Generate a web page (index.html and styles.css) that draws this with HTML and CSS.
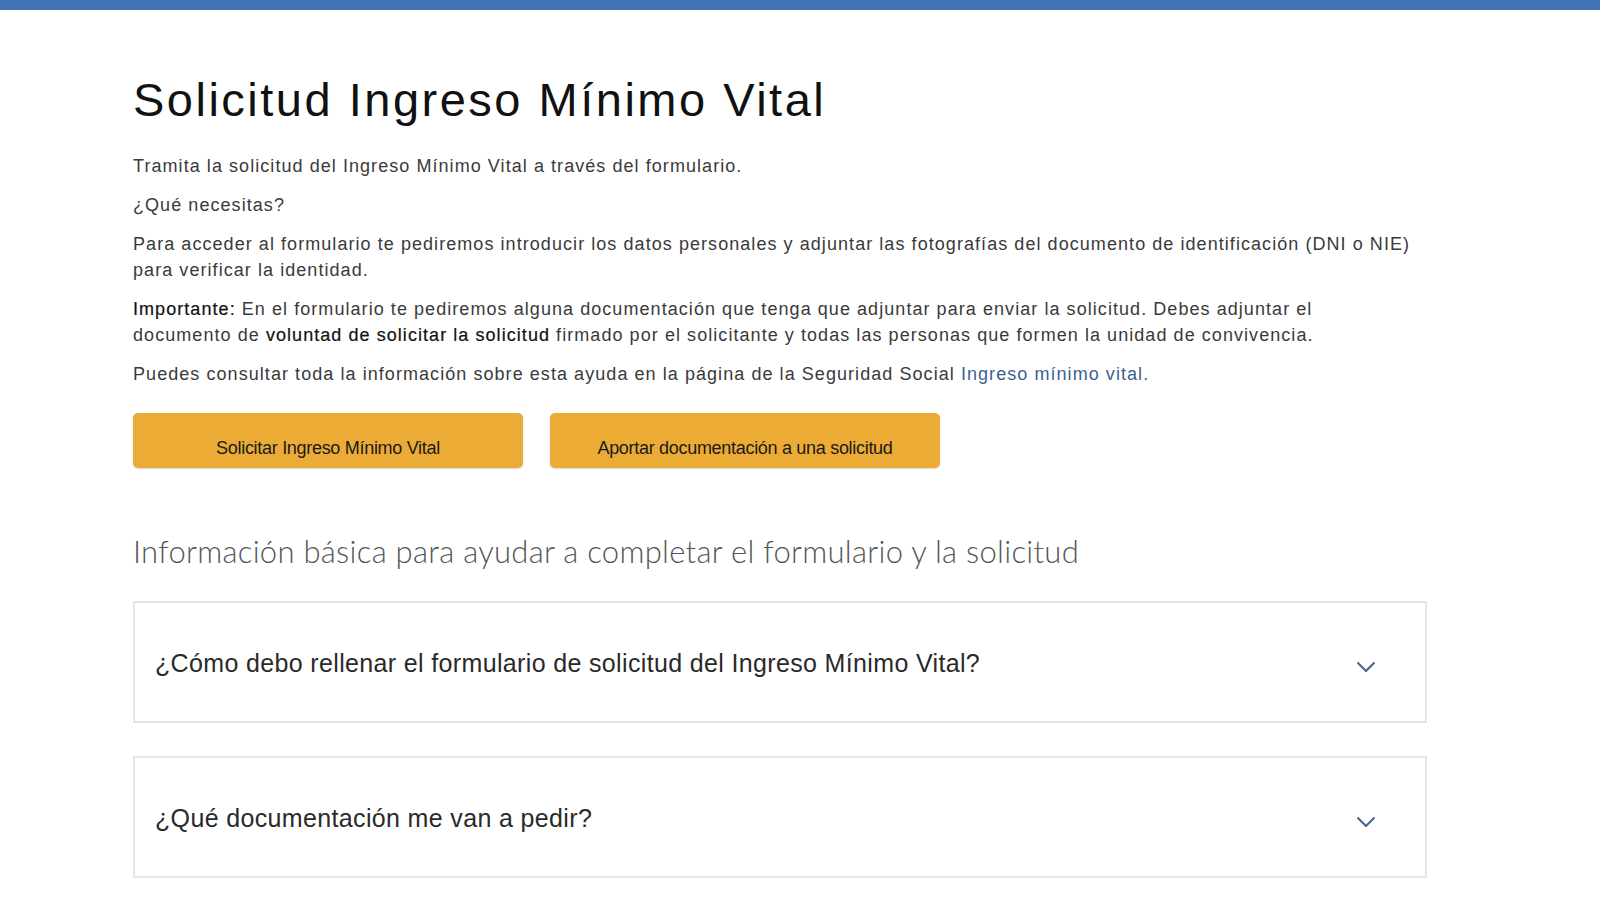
FILE: index.html
```html
<!DOCTYPE html>
<html lang="es">
<head>
<meta charset="utf-8">
<title>Solicitud Ingreso Mínimo Vital</title>
<link rel="stylesheet" href="styles.css">
</head>
<body>
<div class="topbar"></div>
<main class="page">
  <h1 class="title">Solicitud Ingreso Mínimo Vital</h1>
  <p class="txt">Tramita la solicitud del Ingreso Mínimo Vital a través del formulario.</p>
  <p class="txt">¿Qué necesitas?</p>
  <p class="txt">Para acceder al formulario te pediremos introducir los datos personales y adjuntar las fotografías del documento de identificación (DNI o NIE) para verificar la identidad.</p>
  <p class="txt"><span class="strong">Importante:</span> En el formulario te pediremos alguna documentación que tenga que adjuntar para enviar la solicitud. Debes adjuntar el<br>documento de <span class="strong">voluntad de solicitar la solicitud</span> firmado por el solicitante y todas las personas que formen la unidad de convivencia.</p>
  <p class="txt">Puedes consultar toda la información sobre esta ayuda en la página de la Seguridad Social <a class="link" href="#">Ingreso mínimo vital.</a></p>
  <div class="actions">
    <a class="btn" href="#">Solicitar Ingreso Mínimo Vital</a>
    <a class="btn" href="#">Aportar documentación a una solicitud</a>
  </div>
  <h2 class="subtitle">Información básica para ayudar a completar el formulario y la solicitud</h2>
  <div class="acc">
    <div class="acc-item">
      <span class="acc-q">¿Cómo debo rellenar el formulario de solicitud del Ingreso Mínimo Vital?</span>
      <svg class="chev" width="20" height="12" viewBox="0 0 20 12"><path d="M1.5 1.5 L10 10 L18.5 1.5" fill="none" stroke="#46648f" stroke-width="2"/></svg>
    </div>
    <div class="acc-item">
      <span class="acc-q">¿Qué documentación me van a pedir?</span>
      <svg class="chev" width="20" height="12" viewBox="0 0 20 12"><path d="M1.5 1.5 L10 10 L18.5 1.5" fill="none" stroke="#46648f" stroke-width="2"/></svg>
    </div>
  </div>
</main>
</body>
</html>
```
FILE: styles.css
```css
html, body { margin: 0; padding: 0; background: #fff; }
body { font-family: "Liberation Sans", Arial, sans-serif; color: #333; overflow: hidden; }
.topbar { height: 10px; background: #4473b3; }
.page { width: 1294px; padding-left: 133px; }
.title { font-weight: 400; font-size: 47px; line-height: 1; margin: 66px 0 30px; color: #111; letter-spacing: 2.5px; }
.txt { font-size: 18px; line-height: 26px; margin: 0 0 13px; letter-spacing: 1.06px; color: #3a3a3a; }
.strong { font-weight: 400; color: #111; -webkit-text-stroke: 0.2px #111; }
.link { color: #3d5f8f; text-decoration: none; }
.actions { display: flex; gap: 27px; margin-top: 26px; }
.btn { display: flex; align-items: center; justify-content: center; width: 390px; height: 55px; padding-top: 15px; box-sizing: border-box; background: #ecab35; border-radius: 5px; color: #1a1a1a; text-decoration: none; font-size: 18px; letter-spacing: -0.3px; box-shadow: 0 1px 2px rgba(0,0,0,0.15); }
.subtitle { font-family: Lato, "Liberation Sans", sans-serif; font-weight: 300; font-size: 31px; color: #555; margin: 64px 0 31px; letter-spacing: 0.28px; }
.acc { display: flex; flex-direction: column; gap: 33px; }
.acc-item { display: flex; align-items: center; justify-content: space-between; height: 122px; box-sizing: border-box; border: 2px solid #e6e6e6; padding: 3px 49px 0 20px; }
.acc-q { font-size: 25px; color: #2a2a2a; letter-spacing: 0.35px; }
.chev { display: block; margin-top: 6px; }
```
